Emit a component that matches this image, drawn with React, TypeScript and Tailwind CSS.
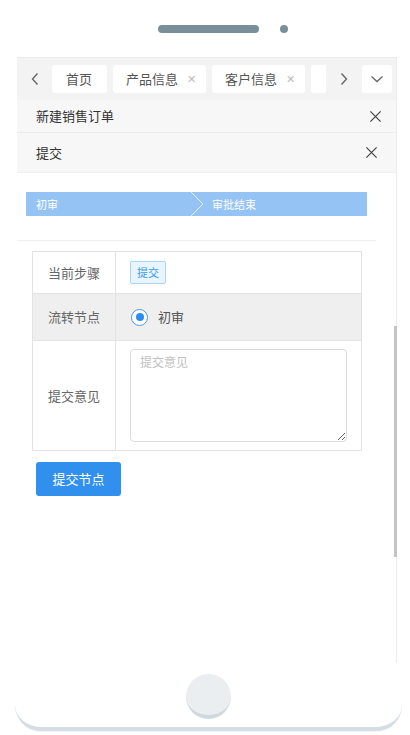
import React from 'react'

const font = { fontFamily: '"Noto Sans CJK SC", "Noto Sans", sans-serif' }

function CloseIcon({ size = 14, className = '' }: { size?: number; className?: string }) {
  return (
    <svg width={size} height={size} viewBox="0 0 14 14" className={className}>
      <path d="M1.5 1.5 L12.5 12.5 M12.5 1.5 L1.5 12.5" stroke="currentColor" strokeWidth="1.3" fill="none" />
    </svg>
  )
}

function Tab({ label, closable }: { label: string; closable?: boolean }) {
  return (
    <div className={`flex h-[28px] shrink-0 items-center gap-[9px] rounded-[3px] bg-white text-[13px] text-[#555] ${closable ? 'pl-[13px] pr-[10px]' : 'pl-[14px] pr-[15px]'}`}>
      <span>{label}</span>
      {closable && <span className="text-[11px] leading-none text-[#bbb]">✕</span>}
    </div>
  )
}

export default function App() {
  return (
    <div className="relative h-[735px] w-[410px] overflow-hidden bg-white" style={font}>
      {/* phone body */}
      <div className="ml-[15px] flex h-[731px] w-[387px] flex-col rounded-b-[26px] border-b-[4px] border-[#d3dde3] bg-white shadow-[0_1px_1px_rgba(0,0,0,0.05)]">
        {/* speaker */}
        <div className="flex h-[57px] shrink-0 items-center gap-[21px] pl-[143px]">
          <div className="h-[8px] w-[101px] rounded-full bg-[#7b8f9b]" />
          <div className="h-[8px] w-[8px] rounded-full bg-[#7b8f9b]" />
        </div>

        {/* screen */}
        <div className="ml-[2px] flex h-[606px] w-[380px] flex-col border-r border-[#ececec]">
          {/* tab bar */}
          <div className="flex h-[43px] shrink-0 items-center border-t border-[#ebebeb] bg-[#f3f3f3] pb-[1px]">
            <div className="flex w-[35px] shrink-0 justify-center text-[#666]">
              <svg width="10" height="14" viewBox="0 0 10 14"><path d="M7.5 1.5 L2.5 7 L7.5 12.5" stroke="currentColor" strokeWidth="1.4" fill="none" /></svg>
            </div>
            <div className="flex min-w-0 flex-1 gap-[6px] overflow-hidden">
              <Tab label="首页" />
              <Tab label="产品信息" closable />
              <Tab label="客户信息" closable />
              <div className="h-[28px] w-[20px] shrink-0 rounded-[3px] bg-white" />
            </div>
            <div className="flex w-[36px] shrink-0 justify-center bg-[#f3f3f3] text-[#666]">
              <svg width="10" height="14" viewBox="0 0 10 14"><path d="M2.5 1.5 L7.5 7 L2.5 12.5" stroke="currentColor" strokeWidth="1.4" fill="none" /></svg>
            </div>
            <div className="flex h-[28px] w-[30px] shrink-0 items-center justify-center rounded-[3px] bg-white text-[#666]">
              <svg width="14" height="10" viewBox="0 0 14 10"><path d="M1.5 2.5 L7 7.5 L12.5 2.5" stroke="currentColor" strokeWidth="1.3" fill="none" /></svg>
            </div>
            <div className="w-[4px] shrink-0" />
          </div>

          {/* dialog headers */}
          <div className="flex h-[33px] shrink-0 items-center justify-between border-b border-[#ececec] bg-[#f7f7f7] pl-[19px] pr-[14px] text-[13px] text-[#333]">
            <span>新建销售订单</span>
            <CloseIcon size={13} className="text-[#444]" />
          </div>
          <div className="flex h-[40px] shrink-0 items-center justify-between border-b border-[#f0f0f0] bg-[#f7f7f7] pl-[19px] pr-[18px] text-[13px] text-[#333]">
            <span>提交</span>
            <CloseIcon size={13} className="text-[#444]" />
          </div>

          {/* steps */}
          <div className="ml-[9px] mt-[19px] flex h-[24px] w-[341px] items-center bg-[#95c4f4] text-[11px] text-white">
            <div className="flex w-[163px] items-center pl-[10px]">初审</div>
            <svg width="18" height="24" viewBox="0 0 18 24" className="shrink-0">
              <path d="M2 0 L14 12 L2 24" stroke="#e6f1fc" strokeWidth="1" fill="none" />
            </svg>
            <div className="pl-[5px]">审批结束</div>
          </div>

          <div className="mt-[24px] h-px w-[359px] bg-[#f0f0f0]" />

          {/* form table */}
          <div className="ml-[15px] mt-[10px] w-[330px] border border-[#e3e3e3] text-[13px]">
            <div className="flex h-[41px]">
              <div className="flex w-[83px] shrink-0 items-center justify-center border-r border-[#e3e3e3] text-[#666]">当前步骤</div>
              <div className="flex items-center pl-[14px]">
                <span className="rounded-[2px] border border-[#a9d6f7] bg-[#e8f5fe] px-[6px] py-[3px] text-[11px] leading-[15px] text-[#3d9ae6]">提交</span>
              </div>
            </div>
            <div className="flex h-[47px] border-t border-[#e3e3e3] bg-[#efefef]">
              <div className="flex w-[83px] shrink-0 items-center justify-center border-r border-[#e3e3e3] text-[#666]">流转节点</div>
              <div className="flex items-center gap-[10px] pl-[15px] text-[#555]">
                <span className="flex h-[17px] w-[17px] items-center justify-center rounded-full border-[1.5px] border-[#4a98e6] bg-white">
                  <span className="h-[8px] w-[8px] rounded-full bg-[#2d8cf0]" />
                </span>
                <span>初审</span>
              </div>
            </div>
            <div className="flex h-[110px] border-t border-[#e3e3e3]">
              <div className="flex w-[83px] shrink-0 items-center justify-center border-r border-[#e3e3e3] text-[#666]">提交意见</div>
              <div className="flex-1 pl-[14px] pr-[14px] pt-[8px]">
                <textarea
                  placeholder="提交意见"
                  className="block h-[93px] w-full resize-y rounded-[4px] border border-[#dcdcdc] px-[9px] py-[3px] text-[12px] text-[#333] placeholder:text-[#c0c0c0] outline-none"
                  style={font}
                />
              </div>
            </div>
          </div>

          <div className="ml-[19px] mt-[11px]">
            <button className="h-[34px] w-[85px] rounded-[3px] bg-[#3190ee] text-[13px] text-white" style={font}>提交节点</button>
          </div>
        </div>

        {/* home button */}
        <div className="flex flex-1 items-center justify-center pt-[2px]">
          <div className="h-[45px] w-[45px] rounded-full border-b-[4px] border-[#cfd9df] bg-[#eaeef1]" />
        </div>
      </div>

      <div className="absolute left-[394px] top-[326px] h-[231px] w-[3px] bg-[#c4c4c4]" />
    </div>
  )
}
